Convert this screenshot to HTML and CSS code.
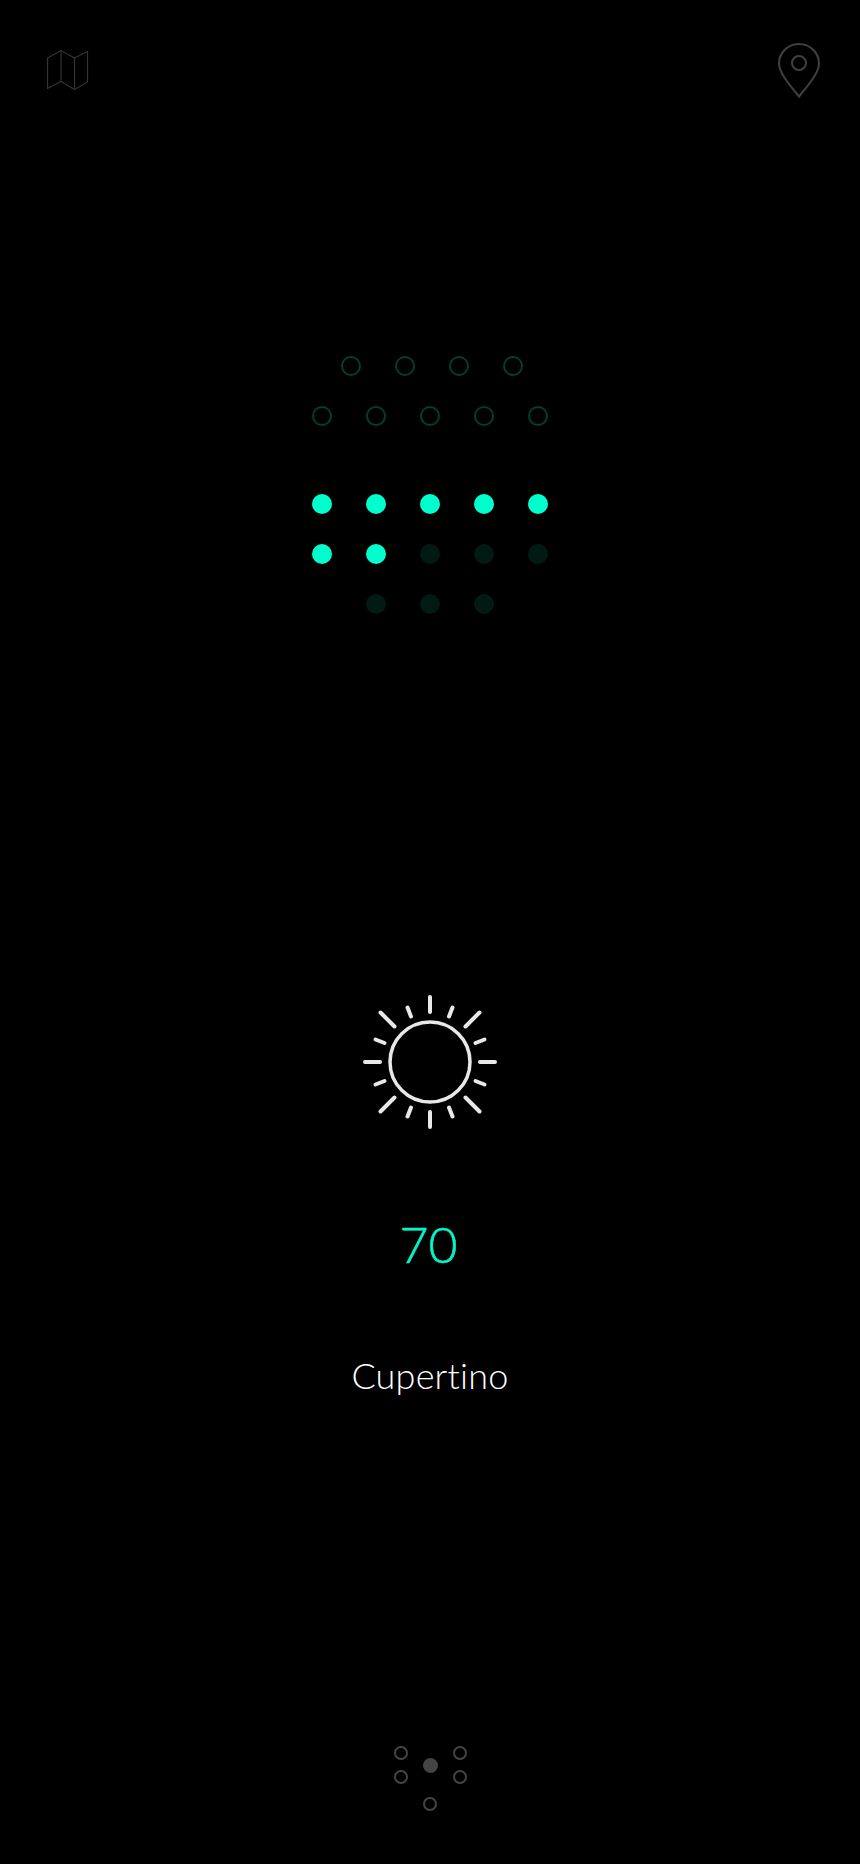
FILE: index.html
```html
<!DOCTYPE html>
<html lang="en">
<head>
    <meta charset="UTF-8">
    <meta name="viewport" content="width=device-width, initial-scale=1.0">
    <title>Cupertino</title>
    <link rel="stylesheet" href="styles.css">
</head>
<body>
    <header class="top-bar">
        <svg class="map-icon" width="46" height="46" viewBox="0 0 46 46" fill="none" stroke="#333" stroke-width="1.2" stroke-linejoin="round">
            <path d="M3.5 11 17 3.5 30.500 11 43.500 4.500V35L30.500 42.500 17 34.500 3.500 41.500Z"/>
            <path d="M17 3.500V34.500M30.500 11V42.500"/>
        </svg>
        <svg class="pin-icon" width="48" height="60" viewBox="0 0 48 60" fill="none" stroke="#404040" stroke-width="2">
            <path d="M24 4C12.800 4 4 12.800 4 23.500 4 33 15 45.500 24 56.500 33 45.500 44 33 44 23.500 44 12.800 35.200 4 24 4Z"/>
            <circle cx="24" cy="23" r="7"/>
        </svg>
    </header>

    <section class="dots">
        <div class="dot-row shifted">
            <span class="dot ring"></span><span class="dot ring"></span><span class="dot ring"></span><span class="dot ring"></span>
        </div>
        <div class="dot-row">
            <span class="dot ring"></span><span class="dot ring"></span><span class="dot ring"></span><span class="dot ring"></span><span class="dot ring"></span>
        </div>
        <div class="dot-row week-gap">
            <span class="dot on"></span><span class="dot on"></span><span class="dot on"></span><span class="dot on"></span><span class="dot on"></span>
        </div>
        <div class="dot-row">
            <span class="dot on"></span><span class="dot on"></span><span class="dot off"></span><span class="dot off"></span><span class="dot off"></span>
        </div>
        <div class="dot-row">
            <span class="dot off"></span><span class="dot off"></span><span class="dot off"></span>
        </div>
    </section>

    <section class="weather">
        <svg class="sun" width="140" height="140" viewBox="-70 -70 140 140" fill="none" stroke="#e8e8e8" stroke-linecap="round">
            <circle r="40" stroke-width="3.500"/>
            <g stroke-width="4">
                <path d="M0 -50V-65M0 50V65M-50 0H-65M50 0H65"/>
                <path d="M-35.500 -35.500-49.500 -49.500M35.500 -35.500 49.500 -49.500M-35.500 35.500-49.500 49.500M35.500 35.500 49.500 49.500"/>
                <path d="M-19 -45.500-22.500 -54.500M19 -45.500 22.500 -54.500M-19 45.500-22.500 54.500M19 45.500 22.500 54.500"/>
                <path d="M-45.500 -19-54.500 -22.500M45.500 -19 54.500 -22.500M-45.500 19-54.500 22.500M45.500 19 54.500 22.500"/>
            </g>
        </svg>
        <div class="temp">70</div>
        <div class="city">Cupertino</div>
    </section>

    <nav class="pager">
        <span class="page-dot top-left"></span>
        <span class="page-dot bottom-left"></span>
        <span class="page-dot current"></span>
        <span class="page-dot top-right"></span>
        <span class="page-dot bottom-right"></span>
        <span class="page-dot bottom"></span>
    </nav>
</body>
</html>
```

FILE: styles.css
```css
* {
    box-sizing: border-box;
}
body {
    margin: 0;
    height: 1864px;
    background: #000;
    font-family: Lato, "Open Sans", sans-serif;
    overflow: hidden;
}
svg {
    display: block;
}
.top-bar {
    display: flex;
    justify-content: space-between;
    align-items: flex-start;
    height: 100px;
    padding: 40px 37px 0 44px;
}
.map-icon {
    margin-top: 7px;
}
.dots {
    display: flex;
    flex-direction: column;
    align-items: center;
    gap: 30px;
    margin-top: 256px;
}
.dot-row {
    display: flex;
    gap: 34px;
}
.dot-row.shifted {
    padding-left: 4px;
}
.dot-row.week-gap {
    margin-top: 38px;
}
.dot {
    width: 20px;
    height: 20px;
    border-radius: 50%;
}
.dot.ring {
    border: 2px solid #023d30;
}
.dot.on {
    background: #00ffcc;
}
.dot.off {
    background: #021a14;
}
.weather {
    display: flex;
    flex-direction: column;
    align-items: center;
    margin-top: 378px;
}
.temp {
    margin-top: 82px;
    padding-right: 3px;
    color: #00f5c8;
    font-size: 50px;
    font-weight: 300;
    -webkit-text-stroke: 0.6px #00f5c8;
    line-height: 60px;
}
.city {
    margin-top: 79px;
    color: #fff;
    font-size: 36px;
    font-weight: 300;
    letter-spacing: 0.2px;
    line-height: 44px;
}
.pager {
    display: grid;
    grid-template-columns: repeat(3, 15px);
    grid-template-rows: 14px 10px 14px 13px 14px;
    column-gap: 14.5px;
    justify-content: center;
    justify-items: center;
    margin-top: 349px;
}
.page-dot {
    width: 14px;
    height: 14px;
    border: 2px solid #444;
    border-radius: 50%;
}
.page-dot.top-left {
    grid-area: 1 / 1;
}
.page-dot.bottom-left {
    grid-area: 3 / 1;
}
.page-dot.top-right {
    grid-area: 1 / 3;
}
.page-dot.bottom-right {
    grid-area: 3 / 3;
}
.page-dot.current {
    grid-column: 2;
    grid-row: 1 / span 3;
    align-self: center;
    width: 15px;
    height: 15px;
    background: #444;
    border: none;
}
.page-dot.bottom {
    grid-area: 5 / 2;
}
```
